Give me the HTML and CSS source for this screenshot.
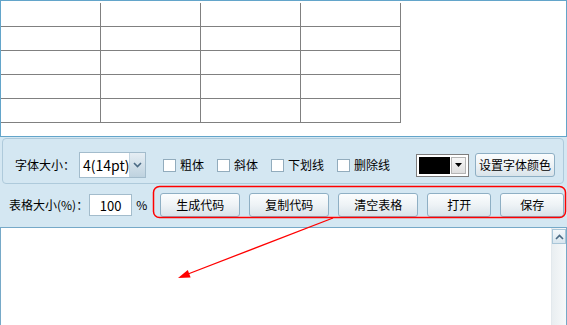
FILE: index.html
```html
<!DOCTYPE html>
<html lang="zh-CN">
  <head>
    <meta charset="UTF-8" />
    <meta name="viewport" content="width=device-width, initial-scale=1.0" />
    <title>表格生成器</title>
    <link rel="stylesheet" href="styles.css">
  </head>
  <body>
    <div class="editor">
      <table class="grid">
        <tr><td></td><td></td><td></td><td></td></tr>
        <tr><td></td><td></td><td></td><td></td></tr>
        <tr><td></td><td></td><td></td><td></td></tr>
        <tr><td></td><td></td><td></td><td></td></tr>
        <tr><td></td><td></td><td></td><td></td></tr>
      </table>
    </div>

    <div class="toolbar">
      <div class="panel font-row">
        <span class="label">字体大小：</span>
        <div class="size-select">
          <span class="value">4(14pt)</span>
          <span class="drop">
            <svg width="9" height="6" viewBox="0 0 9 6"><path d="M1 1l3.5 3.5L8 1" fill="none" stroke="#4b6a84" stroke-width="1.6"/></svg>
          </span>
        </div>
        <label class="check"><span class="box"></span>粗体</label>
        <label class="check"><span class="box"></span>斜体</label>
        <label class="check"><span class="box"></span>下划线</label>
        <label class="check"><span class="box"></span>删除线</label>
        <div class="color-select">
          <span class="swatch"></span>
          <span class="arrow">
            <svg width="7" height="4" viewBox="0 0 7 4"><path d="M0 0h7L3.5 4z" fill="#000"/></svg>
          </span>
        </div>
        <button class="btn color-btn">设置字体颜色</button>
      </div>

      <div class="table-row">
        <span class="label">表格大小(%)：</span>
        <input class="pct" type="text" value="100" />
        <span class="unit">%</span>
        <div class="actions">
          <button class="btn wide">生成代码</button>
          <button class="btn wide">复制代码</button>
          <button class="btn wide">清空表格</button>
          <button class="btn">打开</button>
          <button class="btn">保存</button>
        </div>
      </div>
    </div>

    <div class="output">
      <div class="output-body"></div>
      <div class="scrollbar">
        <div class="scroll-up">
          <svg width="9" height="6" viewBox="0 0 9 6"><path d="M1 5l3.5-3.5L8 5" fill="none" stroke="#4b6a84" stroke-width="1.6"/></svg>
        </div>
      </div>
    </div>

    <!-- red annotation drawn over the screenshot -->
    <svg class="annotation" width="567" height="325" viewBox="0 0 567 325">
      <rect x="153.5" y="186.5" width="412" height="31" rx="6" fill="none" stroke="#f00" stroke-width="1.5"/>
      <line x1="333" y1="218" x2="188" y2="274" stroke="#f00" stroke-width="1.3"/>
      <polygon points="178,278 187.8,270 190.6,277.4" fill="#f00"/>
    </svg>
  </body>
</html>
```

FILE: styles.css
```css
* {
  box-sizing: border-box;
  font-family: "Noto Sans CJK SC", "Noto Sans", sans-serif;
}
body {
  margin: 0;
  width: 567px;
  height: 325px;
  overflow: hidden;
  position: relative;
  background-color: #d4e7f2;
  font-size: 12px;
  color: #000;
}
.editor {
  height: 137px;
  background-color: #fff;
  border: solid 1px #63a5ca;
  overflow: hidden;
}
.grid {
  border-collapse: separate;
  border-spacing: 0;
  margin: 2px 0 0 0;
}
.grid td {
  width: 100px;
  height: 24px;
  padding: 0;
  border-right: solid 1px #808080;
  border-bottom: solid 1px #808080;
}
.toolbar {
  padding-top: 1px;
}
.panel {
  height: 46px;
  margin: 0 3px 0 2px;
  border: solid 1px #aecadb;
  border-radius: 4px;
}
.font-row {
  display: flex;
  align-items: center;
  padding: 8px 0 0 12px;
}
.label {
  line-height: 16px;
  white-space: nowrap;
}
.size-select {
  display: flex;
  width: 67px;
  height: 26px;
  margin-left: 4px;
  background-color: #fff;
  border: solid 1px #a3bccc;
}
.size-select .value {
  flex: 1;
  padding-left: 3px;
  font-size: 14px;
  line-height: 24px;
}
.size-select .drop {
  display: flex;
  align-items: center;
  justify-content: center;
  width: 17px;
  background: linear-gradient(#e6eef4, #bed2df);
  border-left: solid 1px #c3d5e1;
}
.check {
  display: flex;
  align-items: center;
  margin-left: 13px;
  line-height: 16px;
}
.check:first-of-type {
  margin-left: 17px;
}
.check .box {
  width: 13px;
  height: 13px;
  margin-right: 4px;
  background-color: #fff;
  border: solid 1px #92acbd;
}
.color-select {
  display: flex;
  width: 53px;
  height: 23px;
  margin-left: 26px;
  padding: 2px;
  background-color: #fff;
  border: solid 1px #7d7d7d;
}
.color-select .swatch {
  flex: 1;
  background-color: #000;
}
.color-select .arrow {
  display: flex;
  align-items: center;
  justify-content: center;
  width: 15px;
  margin-left: 1px;
  background: linear-gradient(#f7f7f7, #dedede);
  border: solid 1px #b5b5b5;
}
.btn {
  height: 24px;
  padding: 0;
  font-size: 12px;
  line-height: 20px;
  color: #000;
  background: linear-gradient(#fbfdfe, #eef3f6 50%, #d9e3ea);
  border: solid 1px #8eafc4;
  border-radius: 3px;
  cursor: pointer;
}
.color-btn {
  width: 80px;
  margin-left: 6px;
}
.table-row {
  display: flex;
  align-items: center;
  height: 43px;
  padding: 9px 0 10px 9px;
}
.pct {
  width: 43px;
  height: 22px;
  margin-left: 1px;
  padding: 0;
  font-size: 13px;
  text-align: center;
  border: solid 1px #a3bccc;
  outline: none;
}
.unit {
  margin-left: 4px;
  line-height: 16px;
}
.actions {
  display: flex;
  gap: 9px;
  margin-left: 13px;
}
.actions .btn {
  width: 64px;
}
.actions .btn.wide {
  width: 80px;
}
.output {
  display: flex;
  height: 110px;
  background-color: #fff;
  border: solid 1px #76a9c8;
}
.output-body {
  flex: 1;
}
.scrollbar {
  width: 15px;
  background: linear-gradient(90deg, #e9eef1, #f7f9fa);
  border-left: solid 1px #e3e9ed;
}
.scroll-up {
  display: flex;
  align-items: center;
  justify-content: center;
  height: 15px;
  margin-top: 1px;
  background: linear-gradient(#f4f8fb, #d8e6ef);
  border: solid 1px #a9c6d8;
}
.annotation {
  position: absolute;
  left: 0;
  top: 0;
  pointer-events: none;
}
```
